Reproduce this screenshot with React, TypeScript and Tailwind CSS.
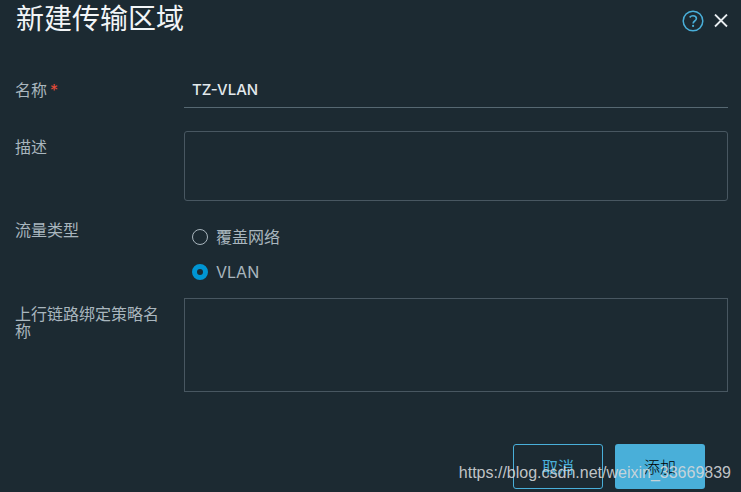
import React, { useState } from "react";

interface FormRowProps {
  label: string;
  htmlFor: string;
  required?: boolean;
  centered?: boolean;
  children: React.ReactNode;
}

const FormRow: React.FC<FormRowProps> = ({
  label,
  htmlFor,
  required,
  centered,
  children,
}) => {
  return (
    <div className={`flex ${centered ? "items-center" : "items-start"}`}>
      <label
        htmlFor={htmlFor}
        className={`w-[169px] shrink-0 pr-4 leading-[17px] ${centered ? "" : "pt-2"}`}
      >
        {label}
        {required && <span className="ml-[3px] text-[#e64b38]">*</span>}
      </label>
      <div className="flex min-w-0 flex-1 flex-col">{children}</div>
    </div>
  );
};

const trafficTypes = [
  { value: "overlay", label: "覆盖网络" },
  { value: "vlan", label: "VLAN" },
];

const App: React.FC = () => {
  const [name, setName] = useState("TZ-VLAN");
  const [traffic, setTraffic] = useState("vlan");

  return (
    <div className="relative min-h-screen bg-[#1c2a32] pb-[3px] font-[Inter,'Noto_Sans_CJK_SC',sans-serif] text-base text-[#a9b6be]">
      <header className="flex h-[42px] items-center justify-between pr-[13px] pl-4">
        <h1 className="pb-1 text-[28px] leading-9 font-normal text-[#f2f5f7]">
          新建传输区域
        </h1>
        <div className="flex items-center gap-[10px]">
          <button type="button" aria-label="帮助" className="text-[#49afd9]">
            <svg width="22" height="22" viewBox="0 0 22 22" fill="none" stroke="currentColor">
              <circle cx="11" cy="11" r="9.8" strokeWidth="1.5" />
              <path
                d="M7.6 7.4C8.6 6.3 9.7 5.8 11 5.8c2 0 3.4 1.1 3.4 2.7 0 2.4-3.3 2.6-3.3 4.9"
                strokeWidth="1.6"
              />
              <circle cx="11.1" cy="15.9" r="1.1" fill="currentColor" stroke="none" />
            </svg>
          </button>
          <button type="button" aria-label="关闭" className="text-[#e8edf0]">
            <svg width="14" height="14" viewBox="0 0 14 14" fill="none" stroke="currentColor">
              <path d="M1 .5l12 12M13 .5L1 12.5" strokeWidth="1.8" />
            </svg>
          </button>
        </div>
      </header>

      <form className="pt-[30px] pr-[13px] pl-[15px]" onSubmit={(e) => e.preventDefault()}>
        <FormRow label="名称" htmlFor="name" required centered>
          <input
            id="name"
            type="text"
            value={name}
            onChange={(e) => setName(e.target.value)}
            className="h-9 w-full border-b border-[#566872] bg-transparent px-2 text-[15px] font-medium text-[#e3e9ec] outline-none"
          />
        </FormRow>

        <div className="mt-[23px]">
          <FormRow label="描述" htmlFor="description">
            <textarea
              id="description"
              className="h-[70px] w-full resize-none rounded-[3px] border border-[#485761] bg-transparent p-2 outline-none"
            />
          </FormRow>
        </div>

        <div className="mt-[13px]">
          <FormRow label="流量类型" htmlFor="overlay">
            <div className="flex flex-col gap-[11px] px-2 pt-[11px]">
              {trafficTypes.map((type) => (
                <div key={type.value} className="flex h-6 items-center gap-2">
                  <input
                    id={type.value}
                    type="radio"
                    name="traffic"
                    checked={traffic === type.value}
                    onChange={() => setTraffic(type.value)}
                    className="size-4 appearance-none rounded-full border border-[#a9b6be] checked:border-[5px] checked:border-[#0095d3]"
                  />
                  <label htmlFor={type.value}>{type.label}</label>
                </div>
              ))}
            </div>
          </FormRow>
        </div>

        <div className="mt-[14px]">
          <FormRow label="上行链路绑定策略名称" htmlFor="policies">
            <textarea
              id="policies"
              className="h-[94px] w-full resize-none border border-[#485761] bg-transparent p-2 outline-none"
            />
          </FormRow>
        </div>

        <div className="mt-[52px] flex justify-end gap-3 pr-[23px]">
          <button
            type="button"
            className="h-[45px] w-[90px] rounded-[3px] border border-[#49afd9] text-[#49afd9]"
          >
            取消
          </button>
          <button
            type="submit"
            className="h-[45px] w-[90px] rounded-[3px] bg-[#49afd9] font-light text-black"
          >
            添加
          </button>
        </div>
      </form>

      <span className="pointer-events-none absolute right-[10px] bottom-[7px] font-['Liberation_Sans',sans-serif] text-base text-[#d5d8da]/90">
        https://blog.csdn.net/weixin_33669839
      </span>
    </div>
  );
};

export default App;
